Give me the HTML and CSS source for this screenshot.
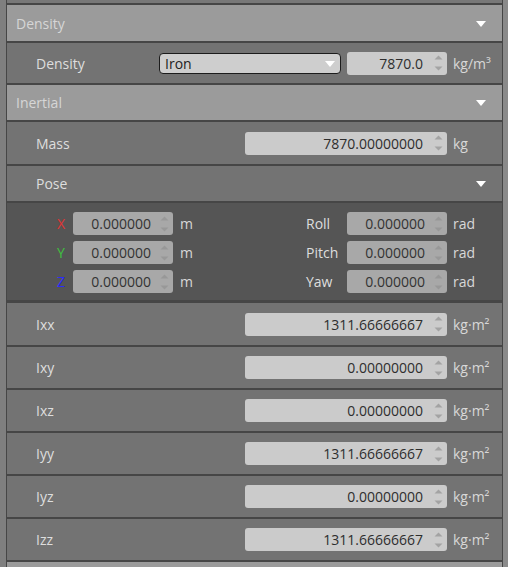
FILE: index.html
```html
<!DOCTYPE html>
<html>
<head>
<meta charset="utf-8">
<link rel="stylesheet" href="styles.css">
</head>
<body>
<div class="frame">
  <div class="strip-left"></div>
  <div class="panel">
    <div class="stub"></div>

    <div class="header h36"><span>Density</span><svg class="tri" width="10" height="6" viewBox="0 0 10 6"><polygon points="0,0 10,0 5,6" fill="#fff"/></svg></div>
    <div class="row h40">
      <span class="label">Density</span>
      <div class="combo"><span>Iron</span><svg width="10" height="6" viewBox="0 0 10 6"><polygon points="0,0 10,0 5,6" fill="#fff"/></svg></div>
      <div class="spin w100"><span class="val">7870.0</span><svg class="arr" width="9" height="18" viewBox="0 0 9 18"><polygon points="0.5,5.5 4.5,1.5 8.5,5.5" fill="#a3a3a3"/><polygon points="0.5,12.5 4.5,16.5 8.5,12.5" fill="#a3a3a3"/></svg></div>
      <span class="unit">kg/m³</span>
    </div>

    <div class="header h35"><span>Inertial</span><svg class="tri" width="10" height="6" viewBox="0 0 10 6"><polygon points="0,0 10,0 5,6" fill="#fff"/></svg></div>
    <div class="row h42">
      <span class="label">Mass</span>
      <div class="spin w202"><span class="val">7870.00000000</span><svg class="arr" width="9" height="18" viewBox="0 0 9 18"><polygon points="0.5,5.5 4.5,1.5 8.5,5.5" fill="#a3a3a3"/><polygon points="0.5,12.5 4.5,16.5 8.5,12.5" fill="#a3a3a3"/></svg></div>
      <span class="unit">kg</span>
    </div>
    <div class="row h35 pose-head">
      <span class="label">Pose</span>
      <svg class="tri" width="10" height="6" viewBox="0 0 10 6"><polygon points="0,0 10,0 5,6" fill="#fff"/></svg>
    </div>

    <div class="pose">
      <div class="prow">
        <span class="axis x">X</span>
        <div class="spin w100 dim"><span class="val">0.000000</span><svg class="arr" width="9" height="18" viewBox="0 0 9 18"><polygon points="0.5,5.5 4.5,1.5 8.5,5.5" fill="#989898"/><polygon points="0.5,12.5 4.5,16.5 8.5,12.5" fill="#989898"/></svg></div>
        <span class="punit">m</span>
        <span class="plabel">Roll</span>
        <div class="spin w100 dim"><span class="val">0.000000</span><svg class="arr" width="9" height="18" viewBox="0 0 9 18"><polygon points="0.5,5.5 4.5,1.5 8.5,5.5" fill="#989898"/><polygon points="0.5,12.5 4.5,16.5 8.5,12.5" fill="#989898"/></svg></div>
        <span class="unit">rad</span>
      </div>
      <div class="prow">
        <span class="axis y">Y</span>
        <div class="spin w100 dim"><span class="val">0.000000</span><svg class="arr" width="9" height="18" viewBox="0 0 9 18"><polygon points="0.5,5.5 4.5,1.5 8.5,5.5" fill="#989898"/><polygon points="0.5,12.5 4.5,16.5 8.5,12.5" fill="#989898"/></svg></div>
        <span class="punit">m</span>
        <span class="plabel">Pitch</span>
        <div class="spin w100 dim"><span class="val">0.000000</span><svg class="arr" width="9" height="18" viewBox="0 0 9 18"><polygon points="0.5,5.5 4.5,1.5 8.5,5.5" fill="#989898"/><polygon points="0.5,12.5 4.5,16.5 8.5,12.5" fill="#989898"/></svg></div>
        <span class="unit">rad</span>
      </div>
      <div class="prow">
        <span class="axis z">Z</span>
        <div class="spin w100 dim"><span class="val">0.000000</span><svg class="arr" width="9" height="18" viewBox="0 0 9 18"><polygon points="0.5,5.5 4.5,1.5 8.5,5.5" fill="#989898"/><polygon points="0.5,12.5 4.5,16.5 8.5,12.5" fill="#989898"/></svg></div>
        <span class="punit">m</span>
        <span class="plabel">Yaw</span>
        <div class="spin w100 dim"><span class="val">0.000000</span><svg class="arr" width="9" height="18" viewBox="0 0 9 18"><polygon points="0.5,5.5 4.5,1.5 8.5,5.5" fill="#989898"/><polygon points="0.5,12.5 4.5,16.5 8.5,12.5" fill="#989898"/></svg></div>
        <span class="unit">rad</span>
      </div>
    </div>

    <div class="row h42">
      <span class="label">Ixx</span>
      <div class="spin w202"><span class="val">1311.66666667</span><svg class="arr" width="9" height="18" viewBox="0 0 9 18"><polygon points="0.5,5.5 4.5,1.5 8.5,5.5" fill="#a3a3a3"/><polygon points="0.5,12.5 4.5,16.5 8.5,12.5" fill="#a3a3a3"/></svg></div>
      <span class="unit">kg·m²</span>
    </div>
    <div class="row h41">
      <span class="label">Ixy</span>
      <div class="spin w202"><span class="val">0.00000000</span><svg class="arr" width="9" height="18" viewBox="0 0 9 18"><polygon points="0.5,5.5 4.5,1.5 8.5,5.5" fill="#a3a3a3"/><polygon points="0.5,12.5 4.5,16.5 8.5,12.5" fill="#a3a3a3"/></svg></div>
      <span class="unit">kg·m²</span>
    </div>
    <div class="row h41">
      <span class="label">Ixz</span>
      <div class="spin w202"><span class="val">0.00000000</span><svg class="arr" width="9" height="18" viewBox="0 0 9 18"><polygon points="0.5,5.5 4.5,1.5 8.5,5.5" fill="#a3a3a3"/><polygon points="0.5,12.5 4.5,16.5 8.5,12.5" fill="#a3a3a3"/></svg></div>
      <span class="unit">kg·m²</span>
    </div>
    <div class="row h41">
      <span class="label">Iyy</span>
      <div class="spin w202"><span class="val">1311.66666667</span><svg class="arr" width="9" height="18" viewBox="0 0 9 18"><polygon points="0.5,5.5 4.5,1.5 8.5,5.5" fill="#a3a3a3"/><polygon points="0.5,12.5 4.5,16.5 8.5,12.5" fill="#a3a3a3"/></svg></div>
      <span class="unit">kg·m²</span>
    </div>
    <div class="row h41">
      <span class="label">Iyz</span>
      <div class="spin w202"><span class="val">0.00000000</span><svg class="arr" width="9" height="18" viewBox="0 0 9 18"><polygon points="0.5,5.5 4.5,1.5 8.5,5.5" fill="#a3a3a3"/><polygon points="0.5,12.5 4.5,16.5 8.5,12.5" fill="#a3a3a3"/></svg></div>
      <span class="unit">kg·m²</span>
    </div>
    <div class="row h41">
      <span class="label">Izz</span>
      <div class="spin w202"><span class="val">1311.66666667</span><svg class="arr" width="9" height="18" viewBox="0 0 9 18"><polygon points="0.5,5.5 4.5,1.5 8.5,5.5" fill="#a3a3a3"/><polygon points="0.5,12.5 4.5,16.5 8.5,12.5" fill="#a3a3a3"/></svg></div>
      <span class="unit">kg·m²</span>
    </div>
    <div class="tail"></div>
  </div>
  <div class="strip-right"></div>
</div>
</body>
</html>
```

FILE: styles.css
```css
html, body {
  margin: 0;
  padding: 0;
  height: 567px;
  overflow: hidden;
  background: #808080;
  font-family: "Open Sans", "Noto Sans", sans-serif;
  font-size: 14px;
}

.frame {
  display: flex;
  height: 567px;
  overflow: hidden;
}

.strip-left {
  width: 6px;
  background: #7f7f7f;
  flex: none;
}

.strip-right {
  flex: 1;
  background: #8a8a8a;
}

.panel {
  width: 495px;
  flex: none;
  border-left: 1px solid #464646;
  border-right: 1px solid #464646;
  display: flex;
  flex-direction: column;
  background: #737373;
  overflow: hidden;
}

.stub {
  height: 3px;
  background: #787878;
  border-bottom: 2px solid #464646;
  flex: none;
}

.header {
  flex: none;
  background: #9b9b9b;
  border-bottom: 2px solid #464646;
  display: flex;
  align-items: center;
  justify-content: space-between;
  padding: 0 16px 0 9px;
  color: #d6d6d6;
}

.tail {
  flex: 1;
  min-height: 0;
  background: #9b9b9b;
}

.h35 { height: 35px; }
.h36 { height: 36px; }
.h40 { height: 40px; }
.h41 { height: 41px; }
.h42 { height: 42px; }

.tri {
  display: block;
  margin-top: 1px;
}

.row {
  flex: none;
  background: #737373;
  border-bottom: 2px solid #464646;
  display: flex;
  align-items: center;
  padding: 0 6px 0 29px;
  color: #dedede;
}

.row .label {
  flex: 1;
}

.pose-head {
  padding-right: 16px;
}

.combo {
  height: 19px;
  width: 170px;
  margin-right: 6px;
  background: #cecece;
  border: 1px solid #1c1c1c;
  border-radius: 4px;
  display: flex;
  align-items: center;
  justify-content: space-between;
  padding: 0 5px;
  color: #222;
}

.combo svg {
  display: block;
  margin-top: 2px;
}

.spin {
  height: 23px;
  background: #cbcbcb;
  border-radius: 3px;
  display: flex;
  align-items: center;
  color: #2e2e2e;
  flex: none;
}

.spin.dim {
  background: #a8a8a8;
  color: #333;
}

.w100 { width: 100px; }
.w202 { width: 202px; }

.spin .val {
  flex: 1;
  text-align: right;
  padding-right: 11px;
}

.spin.dim .val {
  padding-right: 9px;
}

.spin .arr {
  display: block;
  margin-right: 4px;
}

.unit {
  width: 43px;
  margin-left: 6px;
  color: #d8d8d8;
  flex: none;
}

.pose {
  flex: none;
  height: 88px;
  background: #555555;
  border-bottom: 3px solid #464646;
  padding: 9px 6px 0 50px;
  display: flex;
  flex-direction: column;
  gap: 6px;
}

.prow {
  display: flex;
  align-items: center;
  height: 23px;
  color: #dedede;
}

.axis {
  width: 16px;
  flex: none;
}

.axis.x { color: #e03434; }
.axis.y { color: #3fc03f; }
.axis.z { color: #2a2aff; }

.punit {
  width: 126px;
  padding-left: 7px;
  flex: none;
  color: #d8d8d8;
}

.plabel {
  width: 41px;
  flex: none;
}
```
